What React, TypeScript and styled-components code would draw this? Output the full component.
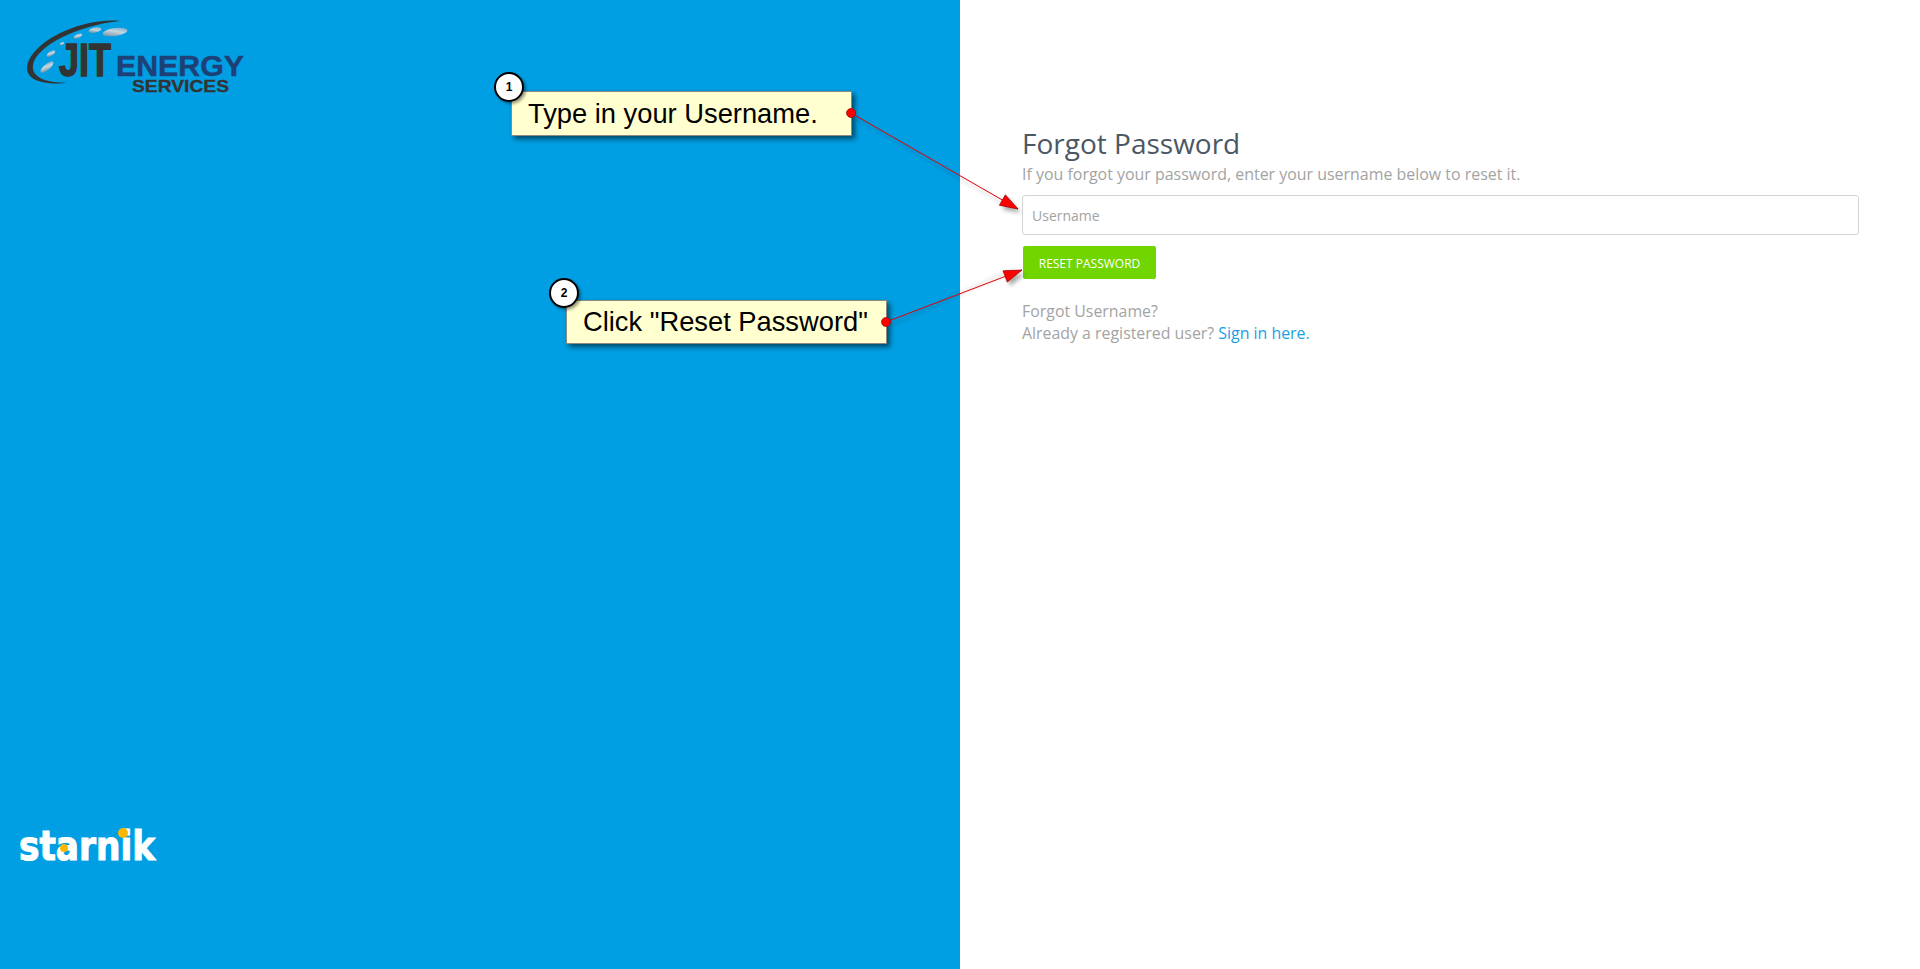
import React from 'react';
import styled, { createGlobalStyle } from 'styled-components';

const GlobalStyle = createGlobalStyle`
  html, body { margin: 0; padding: 0; height: 100%; background: #fff; overflow: hidden; }
  #root { height: 100%; }
  * { box-sizing: border-box; }
`;

const Page = styled.div`
  position: relative;
  display: flex;
  width: 1920px;
  height: 969px;
  font-family: "Open Sans", sans-serif;
`;

const BluePanel = styled.aside`
  flex: 0 0 960px;
  background: #009fe3;
  display: flex;
  flex-direction: column;
  justify-content: space-between;
  padding: 18px 0 94px 18px;
`;

const JitMark = styled.svg`
  display: block;
  width: 240px;
  height: 80px;
`;

const StarnikMark = styled.svg`
  display: block;
  width: 146px;
  height: 56px;
`;

const FormPanel = styled.main`
  flex: 1;
  padding: 124px 61px 0 62px;
`;

const Title = styled.h1`
  margin: 0;
  font-size: 28px;
  font-weight: 400;
  line-height: 38px;
  color: #4b5763;
`;

const Hint = styled.p`
  margin: 0 0 9px;
  font-size: 15.95px;
  line-height: 24px;
  color: #a3a3a3;
`;

const UsernameInput = styled.input`
  display: block;
  width: 100%;
  height: 40px;
  padding: 0 9px;
  border: 1px solid #d4d4d4;
  border-radius: 3px;
  background: #fff;
  font-family: inherit;
  font-size: 14px;
  color: #555;
  &::placeholder { color: #a3a3a3; opacity: 1; }
`;

const ResetButton = styled.button`
  display: block;
  width: 133px;
  height: 33px;
  margin: 11px 0 0 1px;
  padding: 1px 0 0;
  border: 0;
  border-radius: 2px;
  background: #71d500;
  color: #fff;
  font-family: inherit;
  font-size: 12px;
  text-transform: uppercase;
`;

const HelpLines = styled.div`
  margin-top: 21px;
  font-size: 15.9px;
  line-height: 22px;
  color: #a3a3a3;
`;

const SignInLink = styled.a`
  color: #1a9fe5;
  text-decoration: none;
`;

const Callout = styled.div<{ $left: number; $top: number; $width: number; $height: number }>`
  position: absolute;
  left: ${(p) => p.$left}px;
  top: ${(p) => p.$top}px;
  width: ${(p) => p.$width}px;
  height: ${(p) => p.$height}px;
  padding: 0 0 0 16px;
  display: flex;
  align-items: center;
  background: #ffffd0;
  border: 1px solid #8a8a80;
  box-shadow: 3px 3px 5px rgba(0, 0, 0, 0.55);
  font-family: "Liberation Sans", Arial, sans-serif;
  font-size: 27.3px;
  color: #000;
  white-space: nowrap;
`;

const StepBadge = styled.div<{ $left: number; $top: number }>`
  position: absolute;
  left: ${(p) => p.$left}px;
  top: ${(p) => p.$top}px;
  width: 30px;
  height: 30px;
  display: flex;
  align-items: center;
  justify-content: center;
  border: 2px solid #000;
  border-radius: 50%;
  background: #fff;
  box-shadow: 2px 2px 3px rgba(0, 0, 0, 0.4);
  font-family: "Liberation Sans", Arial, sans-serif;
  font-size: 12px;
  font-weight: 700;
  color: #000;
`;

const ArrowLayer = styled.svg`
  position: absolute;
  left: 0;
  top: 0;
  width: 1920px;
  height: 969px;
  pointer-events: none;
`;

const HEAD = 'M0 0 L-18 -6 L-18 6 Z';

const Arrow: React.FC<{ x1: number; y1: number; x2: number; y2: number }> = ({ x1, y1, x2, y2 }) => {
  const angle = (Math.atan2(y2 - y1, x2 - x1) * 180) / Math.PI;
  const head = `translate(${x2} ${y2}) rotate(${angle})`;
  return (
    <g>
      <g transform="translate(3 4)" opacity="0.35" filter="url(#soft)">
        <line x1={x1} y1={y1} x2={x2 - 10} y2={y2 - 5} stroke="#000" strokeWidth="1" />
        <path d={HEAD} fill="#000" transform={head} />
      </g>
      <line x1={x1} y1={y1} x2={x2} y2={y2} stroke="#e60000" strokeWidth="1" />
      <path d={HEAD} fill="#ff0000" stroke="#a00000" strokeWidth="0.7" transform={head} />
      <circle cx={x1} cy={y1} r="4.5" fill="#ff0000" stroke="#a00000" strokeWidth="0.7" />
    </g>
  );
};

const App: React.FC = () => (
  <Page>
    <GlobalStyle />
    <BluePanel>
      <JitMark viewBox="0 0 240 80">
        <defs>
          <linearGradient id="disc" x1="0" y1="1" x2="1" y2="0">
            <stop offset="0" stopColor="#5f7f98" />
            <stop offset="0.55" stopColor="#c8d6e0" />
            <stop offset="1" stopColor="#4f9cc8" />
          </linearGradient>
        </defs>
        <path d="M102 3 C72 0 30 15 14 37 C4 51 9 63 30 65 C38 66 44 65.5 48 64.5 C30 65 13 60 15 47 C18 28 60 7 102 3 Z" fill="#333" />
        <ellipse cx="97" cy="14" rx="12.5" ry="4" fill="url(#disc)" transform="rotate(-8 97 14)" />
        <ellipse cx="77" cy="12" rx="6.5" ry="2.6" fill="url(#disc)" transform="rotate(-12 77 12)" />
        <ellipse cx="60" cy="18" rx="4.5" ry="2" fill="url(#disc)" transform="rotate(-25 60 18)" />
        <ellipse cx="44" cy="25.5" rx="2.4" ry="1.3" fill="url(#disc)" transform="rotate(-30 44 25.5)" />
        <ellipse cx="33" cy="35.5" rx="4.8" ry="2.1" fill="url(#disc)" transform="rotate(-35 33 35.5)" />
        <ellipse cx="29" cy="49" rx="8" ry="3" fill="url(#disc)" transform="rotate(-40 29 49)" />
        <text x="41" y="58" fontFamily="Liberation Sans, Arial, sans-serif" fontWeight="700" fontSize="46" fill="#333" stroke="#333" strokeWidth="1.5" textLength="52" lengthAdjust="spacingAndGlyphs">JIT</text>
        <text x="98" y="58" fontFamily="Liberation Sans, Arial, sans-serif" fontWeight="700" fontSize="29" fill="#1d4077" stroke="#1d4077" strokeWidth="0.4" textLength="128" lengthAdjust="spacingAndGlyphs">ENERGY</text>
        <text x="114" y="73.5" fontFamily="Liberation Sans, Arial, sans-serif" fontWeight="700" fontSize="16.5" fill="#333" stroke="#333" strokeWidth="0.3" textLength="97" lengthAdjust="spacingAndGlyphs">SERVICES</text>
      </JitMark>
      <StarnikMark viewBox="0 0 146 56">
        <text x="1" y="41" fontFamily="DejaVu Sans, sans-serif" fontWeight="700" fontSize="40" fill="#fff" stroke="#fff" strokeWidth="1.1" textLength="136" lengthAdjust="spacingAndGlyphs">starnik</text>
        <circle cx="46" cy="29" r="4" fill="#fbb800" />
        <circle cx="105" cy="14" r="5" fill="#fbb800" />
      </StarnikMark>
    </BluePanel>
    <FormPanel>
      <Title>Forgot Password</Title>
      <Hint>If you forgot your password, enter your username below to reset it.</Hint>
      <UsernameInput placeholder="Username" readOnly />
      <ResetButton>Reset Password</ResetButton>
      <HelpLines>
        Forgot Username?
        <br />
        Already a registered user? <SignInLink href="#">Sign in here.</SignInLink>
      </HelpLines>
    </FormPanel>
    <Callout $left={511} $top={91} $width={341} $height={45}>Type in your Username.</Callout>
    <StepBadge $left={494} $top={72}>1</StepBadge>
    <Callout $left={566} $top={300} $width={321} $height={44}>Click "Reset Password"</Callout>
    <StepBadge $left={549} $top={278}>2</StepBadge>
    <ArrowLayer viewBox="0 0 1920 969">
      <defs>
        <filter id="soft" x="-20%" y="-20%" width="140%" height="140%">
          <feGaussianBlur stdDeviation="2" />
        </filter>
      </defs>
      <Arrow x1={851} y1={113} x2={1018} y2={209} />
      <Arrow x1={886} y1={322} x2={1022} y2={270} />
    </ArrowLayer>
  </Page>
);

export default App;
